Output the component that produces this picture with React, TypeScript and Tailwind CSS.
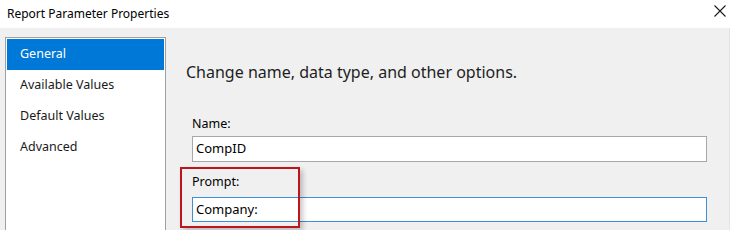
import React from 'react';

const items = ['General', 'Available Values', 'Default Values', 'Advanced'];

const App = () => {
  return (
    <div className="w-[732px] h-[230px] overflow-hidden bg-white flex flex-col text-black font-['Noto_Sans',sans-serif]">
      {/* title bar */}
      <div className="h-[28px] flex items-center justify-between pl-[7px] pr-[6px] shrink-0">
        <span className="text-[12px] leading-none">Report Parameter Properties</span>
        <svg width="12" height="12" viewBox="0 0 12 12" className="mt-[-6px]">
          <path d="M0.5 0.5 L11.5 11.5 M11.5 0.5 L0.5 11.5" stroke="#1a1a1a" strokeWidth="1.1" />
        </svg>
      </div>

      {/* body */}
      <div className="flex-1 flex bg-[#f0f0f0] mr-[2px] border-r border-[#e4e4e4]">
        <div className="pl-[5px] pt-[9px] flex">
          <div className="w-[161px] border border-[#a0a0a0] border-b-0 bg-white p-px pt-[1px] flex flex-col">
            {items.map((item, i) => (
              <div
                key={item}
                className={`h-[31px] flex items-center pl-[13px] text-[12.5px] ${i === 0 ? 'bg-[#0078d7] text-white' : 'text-[#1a1a1a]'}`}
              >
                {item}
              </div>
            ))}
          </div>
        </div>

        <div className="relative flex-1 flex flex-col">
          <div className="pl-[20px] mt-[33px] text-[16px] leading-[22px] text-[#1e1e1e]">
            Change name, data type, and other options.
          </div>

          <div className="pl-[26px] mt-[33px] text-[12.5px] leading-[16px]">Name:</div>
          <div className="ml-[26px] mt-[4px] w-[515px] h-[26px] border border-[#a8a8a8] bg-white flex items-center pl-[3px] text-[13px]">
            CompID
          </div>

          <div className="pl-[26px] mt-[12px] text-[12.5px] leading-[16px]">Prompt:</div>
          <div className="ml-[26px] mt-[7px] w-[515px] h-[25px] border border-[#3c8fd8] bg-white flex items-center pl-[3px] text-[13px]">
            Company:
          </div>

          {/* annotation */}
          <div className="absolute left-[14px] top-[139px] w-[120px] h-[61px] border-2 border-[#c0141c] shadow-[3px_3px_5px_rgba(0,0,0,0.22)]" />
        </div>
      </div>
    </div>
  );
};

export default App;
